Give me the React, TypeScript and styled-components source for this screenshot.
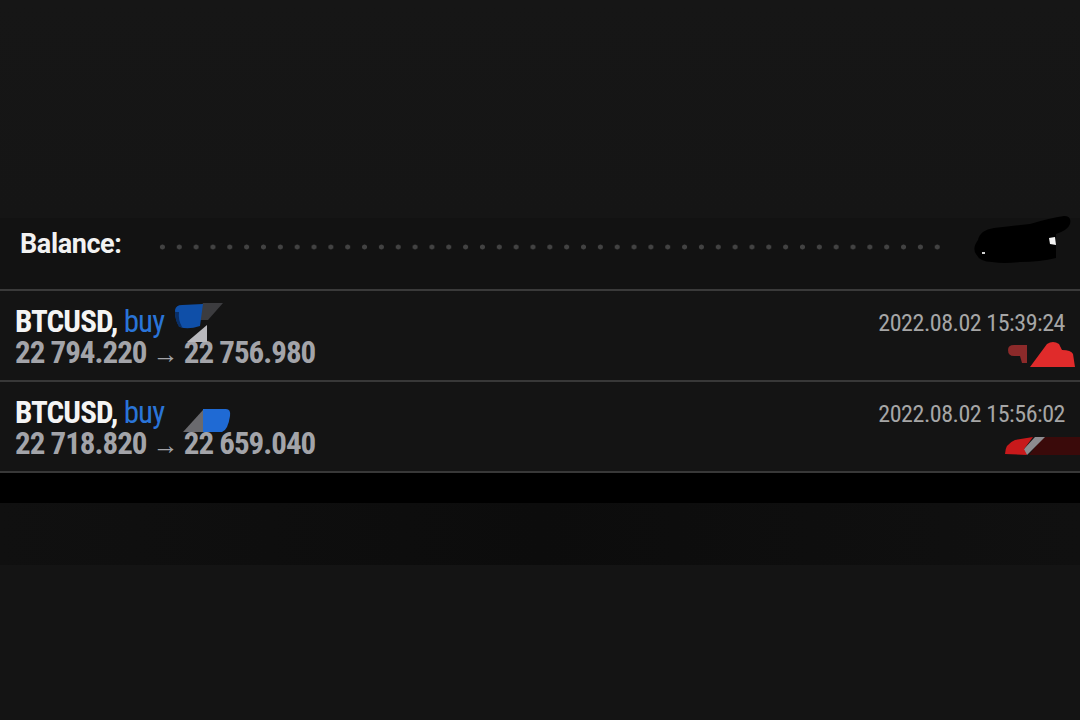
import React from 'react';
import styled, { createGlobalStyle } from 'styled-components';

const GlobalStyle = createGlobalStyle`
  html, body {
    margin: 0;
    padding: 0;
    background: #161616;
    overflow: hidden;
  }
`;

const Page = styled.div`
  display: flex;
  flex-direction: column;
  width: 1080px;
  height: 720px;
  background: #161616;
  font-family: "Roboto Condensed", Roboto, "Liberation Sans", sans-serif;
`;

const TopSpace = styled.div`
  height: 218px;
  background: linear-gradient(180deg, #161616 0%, #151515 100%);
`;

const BalanceRow = styled.div`
  position: relative;
  display: flex;
  align-items: flex-start;
  height: 73px;
  padding: 11px 0 0 20px;
  box-sizing: border-box;
  background: #121212;
  border-bottom: 2px solid #3a3a3a;
`;

const BalanceLabel = styled.span`
  font-family: Roboto, "Liberation Sans", sans-serif;
  font-size: 27px;
  line-height: 30px;
  font-weight: 700;
  color: #f2f2f2;
  letter-spacing: -0.4px;
`;

const Dots = styled.div`
  width: 792px;
  height: 8px;
  margin: 14px 0 0 33px;
  background-image: radial-gradient(circle, #424242 2.2px, transparent 2.8px);
  background-size: 16.85px 8px;
  background-repeat: repeat-x;
`;

const Redact = styled.svg`
  position: absolute;
  pointer-events: none;
`;

const TradeRow = styled.div`
  display: flex;
  justify-content: space-between;
  height: 91px;
  padding: 15px 15px 0 15px;
  box-sizing: border-box;
  background: #141414;
  border-bottom: 2px solid #383838;
`;

const Left = styled.div`
  position: relative;
  display: flex;
  flex-direction: column;
`;

const Right = styled.div`
  position: relative;
  display: flex;
  flex-direction: column;
  align-items: flex-end;
`;

const Title = styled.div`
  font-size: 31px;
  line-height: 31px;
  font-weight: 700;
  letter-spacing: -0.9px;
  color: #f4f4f4;
`;

const Side = styled.span`
  font-weight: 400;
  color: #2a74d8;
`;

const Prices = styled.div`
  font-size: 31px;
  line-height: 31px;
  font-weight: 700;
  letter-spacing: -1px;
  color: #a3a4a9;
`;

const Arrow = styled.span`
  font-weight: 400;
  font-size: 26px;
`;

const Time = styled.div`
  margin-top: 3px;
  font-size: 24px;
  line-height: 28px;
  letter-spacing: -0.45px;
  color: #a6a6a6;
`;

const BlackBand = styled.div`
  height: 30px;
  background: #000;
`;

const DarkBand = styled.div`
  height: 62px;
  background: linear-gradient(90deg, #101010 0%, #0c0c0c 50%, #101010 100%);
`;

const Bottom = styled.div`
  flex: 1;
  background: #141414;
`;

type Trade = {
  open: string;
  close: string;
  time: string;
  variant: 1 | 2;
};

const trades: Trade[] = [
  { open: '22 794.220', close: '22 756.980', time: '2022.08.02 15:39:24', variant: 1 },
  { open: '22 718.820', close: '22 659.040', time: '2022.08.02 15:56:02', variant: 2 },
];

const BlueMark: React.FC<{ variant: 1 | 2 }> = ({ variant }) =>
  variant === 1 ? (
    <Redact style={{ left: 155, top: -6 }} width="56" height="44" viewBox="0 0 56 44">
      <polygon points="33,3 53,3 38,20 25,20" fill="#3c3c3f" />
      <path d="M5,10 Q6,5 12,5 L33,4 L30,26 Q18,30 10,27 Q5,22 5,10 Z" fill="#0f4fa8" />
      <path d="M5,12 Q5,20 9,27 L12,27 Q8,20 9,12 Z" fill="#0a2f66" />
      <polygon points="17,42 37,42 37,25" fill="#b9b9bd" />
    </Redact>
  ) : (
    <Redact style={{ left: 155, top: 3 }} width="62" height="34" viewBox="0 0 62 34">
      <polygon points="13,32 33,10 33,32" fill="#6a6a6e" />
      <path d="M33,9 L56,9 Q61,9 60,16 Q58,30 52,32 L33,32 Z" fill="#1f6ad4" />
    </Redact>
  );

const RedMark: React.FC<{ variant: 1 | 2 }> = ({ variant }) =>
  variant === 1 ? (
    <Redact style={{ right: -12, top: 32 }} width="72" height="32" viewBox="0 0 72 32">
      <path d="M3,12 Q3,7 9,7 L22,7 L22,25 L17,25 L15,18 L9,18 Q3,18 3,12 Z" fill="#8c2a2a" />
      <path d="M25,29 L42,6 Q48,2 54,6 L57,12 Q66,12 68,16 L70,29 Z" fill="#e02b2b" />
    </Redact>
  ) : (
    <Redact style={{ right: -15, top: 37 }} width="77" height="24" viewBox="0 0 77 24">
      <path d="M40,3 L77,3 L77,21 L26,21 Z" fill="#3a0a0a" />
      <polygon points="24,21 42,3 32,3 20,16" fill="#8c8c90" />
      <path d="M2,20 Q2,10 12,6 L30,3 L21,15 L24,21 Z" fill="#c8191b" />
    </Redact>
  );

const TradeItem: React.FC<{ trade: Trade }> = ({ trade }) => (
  <TradeRow>
    <Left>
      <Title>
        BTCUSD, <Side>buy</Side>
      </Title>
      <Prices>
        {trade.open} <Arrow>→</Arrow> {trade.close}
      </Prices>
      <BlueMark variant={trade.variant} />
    </Left>
    <Right>
      <Time>{trade.time}</Time>
      <RedMark variant={trade.variant} />
    </Right>
  </TradeRow>
);

const App: React.FC = () => (
  <>
    <GlobalStyle />
    <Page>
      <TopSpace />
      <BalanceRow>
        <BalanceLabel>Balance:</BalanceLabel>
        <Dots />
        <Redact style={{ left: 970, top: -4 }} width="104" height="52" viewBox="0 0 104 52">
          <path
            d="M8,26 Q10,16 24,14 L60,10 Q80,4 94,2 Q102,2 100,10 Q98,16 86,20 L86,44 Q70,48 50,48 Q34,50 22,48 Q10,48 6,40 Q2,34 8,26 Z"
            fill="#000"
          />
          <polygon points="79,24 85,23 86,31 80,30" fill="#f4f4f4" />
          <rect x="12" y="38" width="3" height="2" fill="#d0d0d0" />
        </Redact>
      </BalanceRow>
      {trades.map((t) => (
        <TradeItem key={t.time} trade={t} />
      ))}
      <BlackBand />
      <DarkBand />
      <Bottom />
    </Page>
  </>
);

export default App;
